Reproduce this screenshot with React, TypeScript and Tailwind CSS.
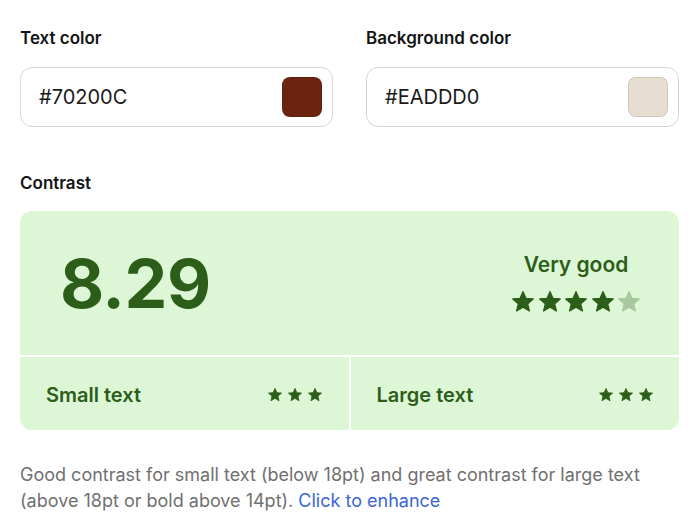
import React from "react";

const STAR = "M12 2.6l2.7 6.1 6.6.6-5 4.4 1.5 6.5L12 16.8l-5.8 3.4 1.5-6.5-5-4.4 6.6-.6z";

function Star({ size, color }: { size: number; color: string }) {
  return (
    <svg width={size} height={size} viewBox="2 2 20 20" aria-hidden>
      <path d={STAR} fill={color} stroke={color} strokeWidth={1.2} strokeLinejoin="round" />
    </svg>
  );
}

function ColorInput({ label, value, swatch }: { label: string; value: string; swatch: string }) {
  return (
    <div className="flex flex-col">
      <div className="text-[17px] leading-6 font-semibold text-[#141414]">{label}</div>
      <div className="mt-[17px] h-[60px] rounded-[12px] border border-[#d6d6d6] bg-white flex items-center justify-between pl-[18px] pr-[10px]">
        <span className="text-[20px] text-[#1a1a1a]">{value}</span>
        <div
          className="w-10 h-10 rounded-[8px] border border-black/10"
          style={{ backgroundColor: swatch }}
        />
      </div>
    </div>
  );
}

export default function App() {
  const green = "#2c5e1a";
  return (
    <div
      className="w-[700px] h-[530px] bg-white pl-5 pr-[21px] pt-[26px]"
      style={{ fontFamily: "Inter, 'Noto Sans', sans-serif" }}
    >
      <div className="grid grid-cols-2 gap-[33px]">
        <ColorInput label="Text color" value="#70200C" swatch="#6b2410" />
        <ColorInput label="Background color" value="#EADDD0" swatch="#e8ddd1" />
      </div>

      <div className="mt-[44px] text-[17px] leading-6 font-semibold text-[#141414]">Contrast</div>

      <div className="mt-4 rounded-[12px] overflow-hidden flex flex-col gap-[2px] bg-white">
        <div className="h-[144px] bg-[#ddf7d6] flex items-center justify-between pl-10 pr-[39px]">
          <span className="text-[68px] leading-none font-bold tracking-[-0.5px]" style={{ color: green }}>
            8.29
          </span>
          <div className="flex flex-col items-center">
            <span className="text-[21px] leading-6 font-semibold" style={{ color: green }}>
              Very good
            </span>
            <div className="mt-[14px] flex gap-[4.5px]">
              <Star size={22} color={green} />
              <Star size={22} color={green} />
              <Star size={22} color={green} />
              <Star size={22} color={green} />
              <Star size={22} color="#a8c9a0" />
            </div>
          </div>
        </div>
        <div className="grid grid-cols-2 gap-[2px]">
          <div className="h-[73px] bg-[#ddf7d6] flex items-center justify-between pl-[26px] pr-[27px] pt-[3px]">
            <span className="text-[20px] font-semibold" style={{ color: green }}>Small text</span>
            <div className="flex gap-[6px]">
              <Star size={14} color={green} />
              <Star size={14} color={green} />
              <Star size={14} color={green} />
            </div>
          </div>
          <div className="h-[73px] bg-[#ddf7d6] flex items-center justify-between pl-[26px] pr-[26px] pt-[3px]">
            <span className="text-[20px] font-semibold" style={{ color: green }}>Large text</span>
            <div className="flex gap-[6px]">
              <Star size={14} color={green} />
              <Star size={14} color={green} />
              <Star size={14} color={green} />
            </div>
          </div>
        </div>
      </div>

      <p className="mt-[32px] text-[18px] leading-[26px] text-[#707070]">
        Good contrast for small text (below 18pt) and great contrast for large text (above 18pt or bold above 14pt).{" "}
        <a className="text-[#3b66d6]">Click to enhance</a>
      </p>
    </div>
  );
}
